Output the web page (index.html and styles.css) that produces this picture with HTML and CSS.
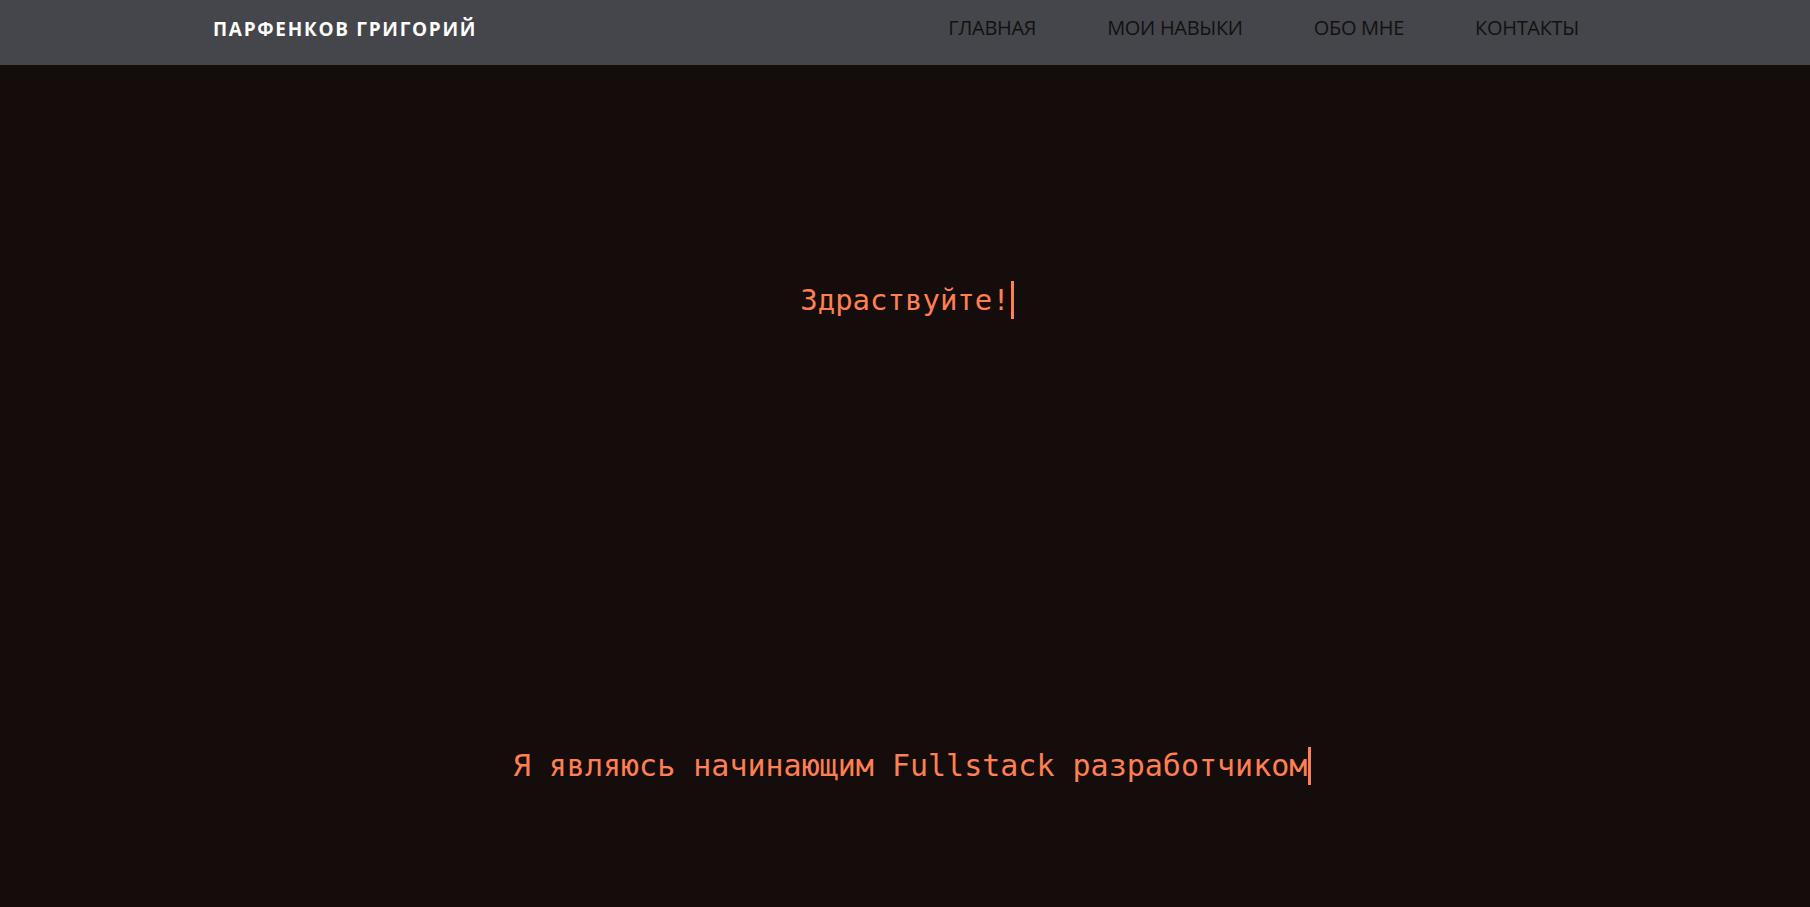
FILE: index.html
```html
<!DOCTYPE html>
<html lang="ru">
<head>
<meta charset="utf-8">
<title>Парфенков Григорий</title>
<link rel="stylesheet" href="styles.css">
</head>
<body>
<header class="topbar">
  <div class="brand">ПАРФЕНКОВ ГРИГОРИЙ</div>
  <nav class="nav">
    <a class="nav-link" href="#">ГЛАВНАЯ</a>
    <a class="nav-link" href="#">МОИ НАВЫКИ</a>
    <a class="nav-link" href="#">ОБО МНЕ</a>
    <a class="nav-link" href="#">КОНТАКТЫ</a>
  </nav>
</header>
<main class="main">
  <section class="hero">
    <p class="typed">Здраствуйте!</p>
  </section>
  <section class="intro">
    <p class="typed">Я являюсь начинающим Fullstack разработчиком</p>
  </section>
</main>
</body>
</html>
```
FILE: styles.css
```css
* { box-sizing: border-box; }
html, body { margin: 0; padding: 0; }
body {
  background: #140d0b;
  font-family: "Open Sans", "Liberation Sans", sans-serif;
  height: 907px;
  overflow: hidden;
}
.topbar {
  height: 65px;
  background: #45464b;
  display: flex;
  align-items: center;
  justify-content: space-between;
  padding: 0 231px 8px 213px;
}
.brand {
  color: #ffffff;
  font-weight: 700;
  font-size: 19px;
  letter-spacing: 1.7px;
}
.nav {
  display: flex;
  gap: 71px;
  margin-bottom: 2px;
}
.nav-link {
  color: #111;
  text-decoration: none;
  font-size: 20px;
  letter-spacing: -0.3px;
}
.main {
  display: flex;
  flex-direction: column;
}
.hero {
  height: 469px;
  display: flex;
  align-items: center;
  justify-content: center;
  padding-left: 4px;
}
.intro {
  display: flex;
  justify-content: center;
  padding-top: 213px;
  padding-left: 14px;
}
.typed {
  margin: 0;
  font-family: "DejaVu Sans Mono", "Liberation Mono", monospace;
  font-size: 30px;
  line-height: 38px;
  color: #ff7f50;
  border-right: 3px solid #ff7f50;
  padding-right: 1px;
}
.hero .typed { font-size: 29px; }
```
